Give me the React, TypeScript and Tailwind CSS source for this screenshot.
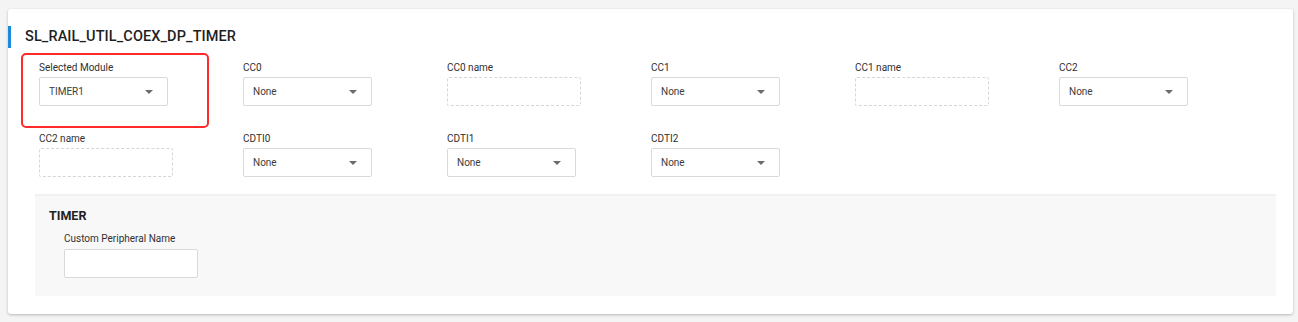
const font = { fontFamily: 'Roboto, "Liberation Sans", sans-serif' };

type Field =
  | { label: string; kind: 'select'; value: string }
  | { label: string; kind: 'text' };

const rows: Field[][] = [
  [
    { label: 'Selected Module', kind: 'select', value: 'TIMER1' },
    { label: 'CC0', kind: 'select', value: 'None' },
    { label: 'CC0 name', kind: 'text' },
    { label: 'CC1', kind: 'select', value: 'None' },
    { label: 'CC1 name', kind: 'text' },
    { label: 'CC2', kind: 'select', value: 'None' },
  ],
  [
    { label: 'CC2 name', kind: 'text' },
    { label: 'CDTI0', kind: 'select', value: 'None' },
    { label: 'CDTI1', kind: 'select', value: 'None' },
    { label: 'CDTI2', kind: 'select', value: 'None' },
  ],
];

const Caret = () => (
  <svg width="8" height="4" viewBox="0 0 8 4" className="shrink-0">
    <path d="M0 0 L8 0 L4 4 Z" fill="#6b6b6b" />
  </svg>
);

const Select = ({ value }: { value: string }) => (
  <div className="flex items-center justify-between w-[129px] h-[29px] pl-[9px] pr-[14px] bg-white border border-[#d9d9d9] rounded-[2px] text-[10px] text-[#3c3c3c]">
    <span>{value}</span>
    <Caret />
  </div>
);

const TextBox = () => (
  <div className="w-[134px] h-[29px] bg-white border border-dashed border-[#d6d6d6] rounded-[2px]" />
);

const FieldCell = ({ field, highlight }: { field: Field; highlight?: boolean }) => (
  <div className="relative w-[204px]">
    {highlight && (
      <div className="absolute left-[-18px] top-[-8px] w-[188px] h-[75px] border-2 border-[#ff2a2a] rounded-[5px] pointer-events-none" />
    )}
    <div className="h-[14px] mb-[2px] text-[10px] leading-[14px] text-[#303030]">
      {field.label}
    </div>
    {field.kind === 'select' ? <Select value={field.value} /> : <TextBox />}
  </div>
);

export default function App() {
  return (
    <div className="w-[1298px] h-[322px] bg-[#f4f4f4] pt-[9px] pl-[8px]" style={font}>
      <div className="w-[1285px] h-[305px] bg-white rounded-[3px] shadow-[0_1px_3px_rgba(0,0,0,0.25)] pt-[17px] flex flex-col">
        <div className="flex items-center h-[22px]">
          <div className="w-[3px] h-[22px] bg-[#1b8ad8]" />
          <div className="pl-[14px] text-[14.5px] font-medium text-[#1f1f1f] tracking-[0.1px]">
            SL_RAIL_UTIL_COEX_DP_TIMER
          </div>
        </div>

        <div className="pl-[31px] pt-[13px] flex flex-col gap-[26px]">
          {rows.map((row, ri) => (
            <div key={ri} className="flex">
              {row.map((f, fi) => (
                <FieldCell key={f.label} field={f} highlight={ri === 0 && fi === 0} />
              ))}
            </div>
          ))}
        </div>

        <div className="ml-[27px] mr-[17px] mt-[17px] h-[102px] bg-[#f8f8f8] border-t-2 border-[#f1f1f1] pl-[14px] pt-[12px]">
          <div className="text-[12.5px] leading-[16px] font-bold text-[#222]">TIMER</div>
          <div className="pl-[15px] pt-[8px]">
            <div className="h-[14px] mb-[3px] text-[10px] leading-[14px] text-[#303030]">
              Custom Peripheral Name
            </div>
            <div className="w-[134px] h-[29px] bg-white border border-[#d9d9d9] rounded-[2px]" />
          </div>
        </div>
      </div>
    </div>
  );
}
